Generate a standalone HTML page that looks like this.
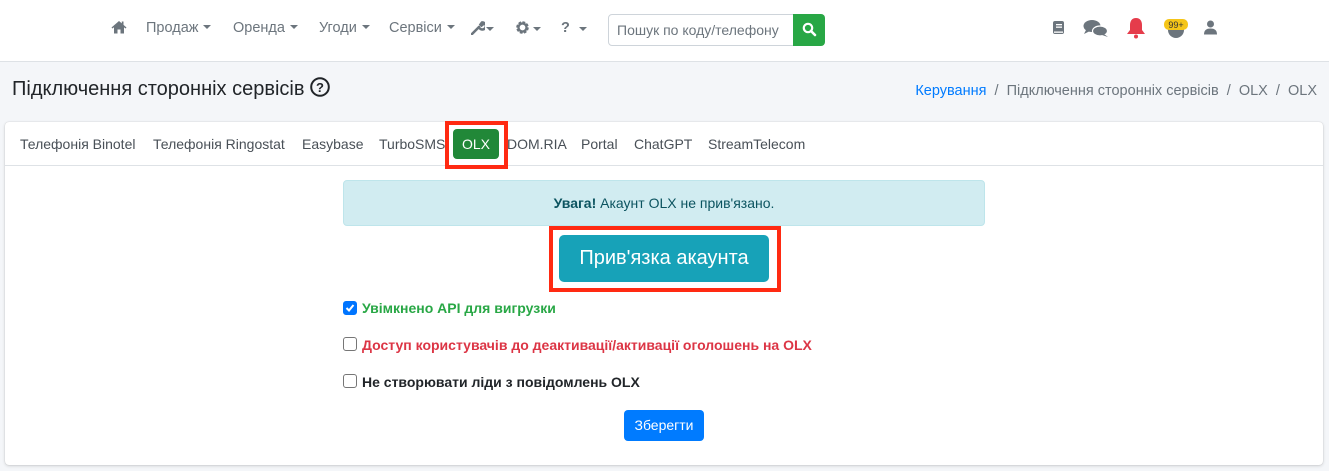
<!DOCTYPE html>
<html><head><meta charset="utf-8"><style>
*{box-sizing:border-box;margin:0;padding:0}
body{width:1329px;height:471px;background:#f4f6f9;font-family:"Liberation Sans",Arial,sans-serif;position:relative;overflow:hidden;color:#212529}
.nav{position:absolute;left:0;top:0;width:1329px;height:62px;background:#fff;border-bottom:1px solid #dee2e6}
.a{position:absolute;top:20px;font-size:14.5px;color:#6c757d;white-space:nowrap}
.car{display:inline-block;width:0;height:0;border-left:4px solid transparent;border-right:4px solid transparent;border-top:4px solid #6c757d;vertical-align:3px;margin-left:5px}
.search{position:absolute;left:608px;top:14px;width:186px;height:32px;border:1px solid #ced4da;border-radius:4px 0 0 4px;font-size:14px;color:#6c757d;padding:7px 8px;white-space:nowrap;overflow:hidden}
.sbtn{position:absolute;left:793px;top:14px;width:32px;height:32px;background:#28a745;border-radius:0 4px 4px 0}
h1{position:absolute;left:12px;top:77px;font-size:20px;font-weight:normal;color:#212529}
.bc{position:absolute;right:12px;top:83px;font-size:14.5px;color:#6c757d}
.bc a{color:#007bff;text-decoration:none}
.card{position:absolute;left:5px;top:122px;width:1318px;height:343px;background:#fff;border-radius:4px;box-shadow:0 0 1px rgba(0,0,0,.2),0 1px 3px rgba(0,0,0,.15)}
.tabs{position:absolute;left:0;top:0;width:100%;height:44px;border-bottom:1px solid #dee2e6}
.t{position:absolute;top:14px;font-size:14px;color:#495057;white-space:nowrap}
.alert{position:absolute;left:343px;top:180px;width:642px;height:46px;background:#d1ecf1;border:1px solid #bee5eb;border-radius:4px;color:#0c5460;font-size:14px;text-align:center;line-height:44px}
.big{position:absolute;left:559px;top:235px;width:210px;height:47px;background:#17a2b8;border-radius:5px;color:#fff;font-size:20px;text-align:center;line-height:46px}
.red{position:absolute;border:4px solid #ff2a12}
.cb{position:absolute;left:343px;width:14px;height:14px;border:1px solid #767676;border-radius:3px;background:#fff}
.lb{position:absolute;left:362px;font-size:14px;font-weight:bold;white-space:nowrap}
.save{position:absolute;left:624px;top:410px;width:80px;height:31px;background:#007bff;border-radius:4px;color:#fff;font-size:14px;text-align:center;line-height:30px}
</style></head><body>
<div class="nav">
<svg style="position:absolute;left:111px;top:20px" width="16" height="14" viewBox="0 0 16 14"><path d="M8 1L0.5 7.5 1.5 8.5 3 7.2V13.5H6.5V9.5H9.5V13.5H13V7.2L14.5 8.5 15.5 7.5 12.5 4.9V1.5H10.8V3.4Z" fill="#6c757d"/></svg>
<span class="a" style="left:146px">Продаж<span class="car"></span></span>
<span class="a" style="left:233px">Оренда<span class="car"></span></span>
<span class="a" style="left:319px">Угоди<span class="car"></span></span>
<span class="a" style="left:389px">Сервіси<span class="car"></span></span>
<svg style="position:absolute;left:471px;top:20px" width="14" height="15" viewBox="0 0 14 15"><path d="M1 14L8 7M8 7A3.5 3.5 0 1 0 11 2.5L9.5 4.5 10.5 5.5 12.5 4" stroke="#6c757d" stroke-width="2.6" fill="none" stroke-linecap="round"/></svg><span class="car" style="position:absolute;left:481px;top:27px"></span>
<svg style="position:absolute;left:515px;top:20px" width="15" height="15" viewBox="0 0 16 16"><circle cx="8" cy="8" r="5" fill="none" stroke="#6c757d" stroke-width="3.4" stroke-dasharray="2.6 1.3"/><circle cx="8" cy="8" r="4.3" fill="none" stroke="#6c757d" stroke-width="2.5"/></svg><span class="car" style="position:absolute;left:528px;top:27px"></span>
<span class="a" style="left:561px;font-weight:bold;color:#6c757d">?</span><span class="car" style="position:absolute;left:574px;top:27px"></span>
<div class="search">Пошук по коду/телефону</div>
<div class="sbtn"><svg style="position:absolute;left:9px;top:8px" width="15" height="15" viewBox="0 0 15 15"><circle cx="6" cy="6" r="4.2" stroke="#fff" stroke-width="2.2" fill="none"/><path d="M9 9L13 13" stroke="#fff" stroke-width="2.6" stroke-linecap="round"/></svg></div>
<svg style="position:absolute;left:1053px;top:21px" width="12" height="14" viewBox="0 0 12 14"><rect x="0" y="0" width="11" height="13" rx="2" fill="#6c757d"/><rect x="3" y="3" width="6" height="1.3" fill="#fff"/><rect x="3" y="5.5" width="6" height="1.3" fill="#fff"/><rect x="1" y="10.5" width="9" height="1.3" fill="#fff"/></svg>
<svg style="position:absolute;left:1083px;top:19px" width="26" height="19" viewBox="0 0 26 19"><ellipse cx="9" cy="7" rx="8.5" ry="6" fill="#6c757d"/><path d="M3 11L1 15 7 12Z" fill="#6c757d"/><ellipse cx="17" cy="12" rx="7.5" ry="5" fill="#6c757d" stroke="#fff" stroke-width="1.2"/><path d="M21 15L25 18 19 16Z" fill="#6c757d"/></svg>
<svg style="position:absolute;left:1126px;top:17px" width="20" height="22" viewBox="0 0 20 22"><path d="M10 1C6 1 4 4 4 8V13L1 17H19L16 13V8C16 4 14 1 10 1Z" fill="#e53c4b"/><circle cx="10" cy="19.5" r="2" fill="#e53c4b"/></svg>
<svg style="position:absolute;left:1164px;top:18px" width="24" height="22" viewBox="0 0 24 22"><circle cx="12" cy="12" r="8" fill="#6c757d"/><rect x="0" y="1" width="24" height="11" rx="5" fill="#f5c518"/><text x="12" y="10" font-size="9" text-anchor="middle" font-family="Liberation Sans" fill="#333">99+</text></svg>
<svg style="position:absolute;left:1204px;top:20px" width="13" height="15" viewBox="0 0 13 15"><circle cx="6.5" cy="4" r="3.5" fill="#6c757d"/><path d="M0 14.5C0 10 2.5 8.5 6.5 8.5S13 10 13 14.5Z" fill="#6c757d"/></svg>
</div>
<h1>Підключення сторонніх сервісів <svg width="20" height="20" viewBox="0 0 20 20" style="vertical-align:-2px"><circle cx="10" cy="10" r="8.8" fill="none" stroke="#212529" stroke-width="2"/><text x="10" y="15" font-size="13" font-weight="bold" text-anchor="middle" font-family="Liberation Sans" fill="#212529">?</text></svg></h1>
<div class="bc"><a>Керування</a> &nbsp;/&nbsp; Підключення сторонніх сервісів &nbsp;/&nbsp; OLX &nbsp;/&nbsp; OLX</div>
<div class="card">
<div class="tabs">
<span class="t" style="left:15px">Телефонія Binotel</span>
<span class="t" style="left:148px">Телефонія Ringostat</span>
<span class="t" style="left:297px">Easybase</span>
<span class="t" style="left:374px">TurboSMS</span>
<div style="position:absolute;left:440px;top:-1px;width:63px;height:48px;border:4px solid #ff2a12"></div>
<div style="position:absolute;left:448px;top:7px;width:46px;height:30px;background:#218838;border-radius:4px;color:#fff;font-size:14px;text-align:center;line-height:30px">OLX</div>
<span class="t" style="left:502px">DOM.RIA</span>
<span class="t" style="left:576px">Portal</span>
<span class="t" style="left:629px">ChatGPT</span>
<span class="t" style="left:703px">StreamTelecom</span>
</div>
</div>
<div class="alert"><b>Увага!</b> Акаунт OLX не прив'язано.</div>
<div class="red" style="left:549px;top:226px;width:232px;height:66px"></div>
<div class="big">Прив'язка акаунта</div>
<div class="cb" style="top:301px;background:#0075ff;border-color:#0075ff"><svg width="12" height="12" viewBox="0 0 12 12" style="position:absolute;left:0;top:0"><path d="M2.5 6L5 8.5 9.5 3" stroke="#fff" stroke-width="2" fill="none"/></svg></div>
<span class="lb" style="top:300px;color:#28a745">Увімкнено API для вигрузки</span>
<div class="cb" style="top:337px"></div>
<span class="lb" style="top:337px;color:#dc3545">Доступ користувачів до деактивації/активації оголошень на OLX</span>
<div class="cb" style="top:374px"></div>
<span class="lb" style="top:374px">Не створювати ліди з повідомлень OLX</span>
<div class="save">Зберегти</div>
</body></html>
